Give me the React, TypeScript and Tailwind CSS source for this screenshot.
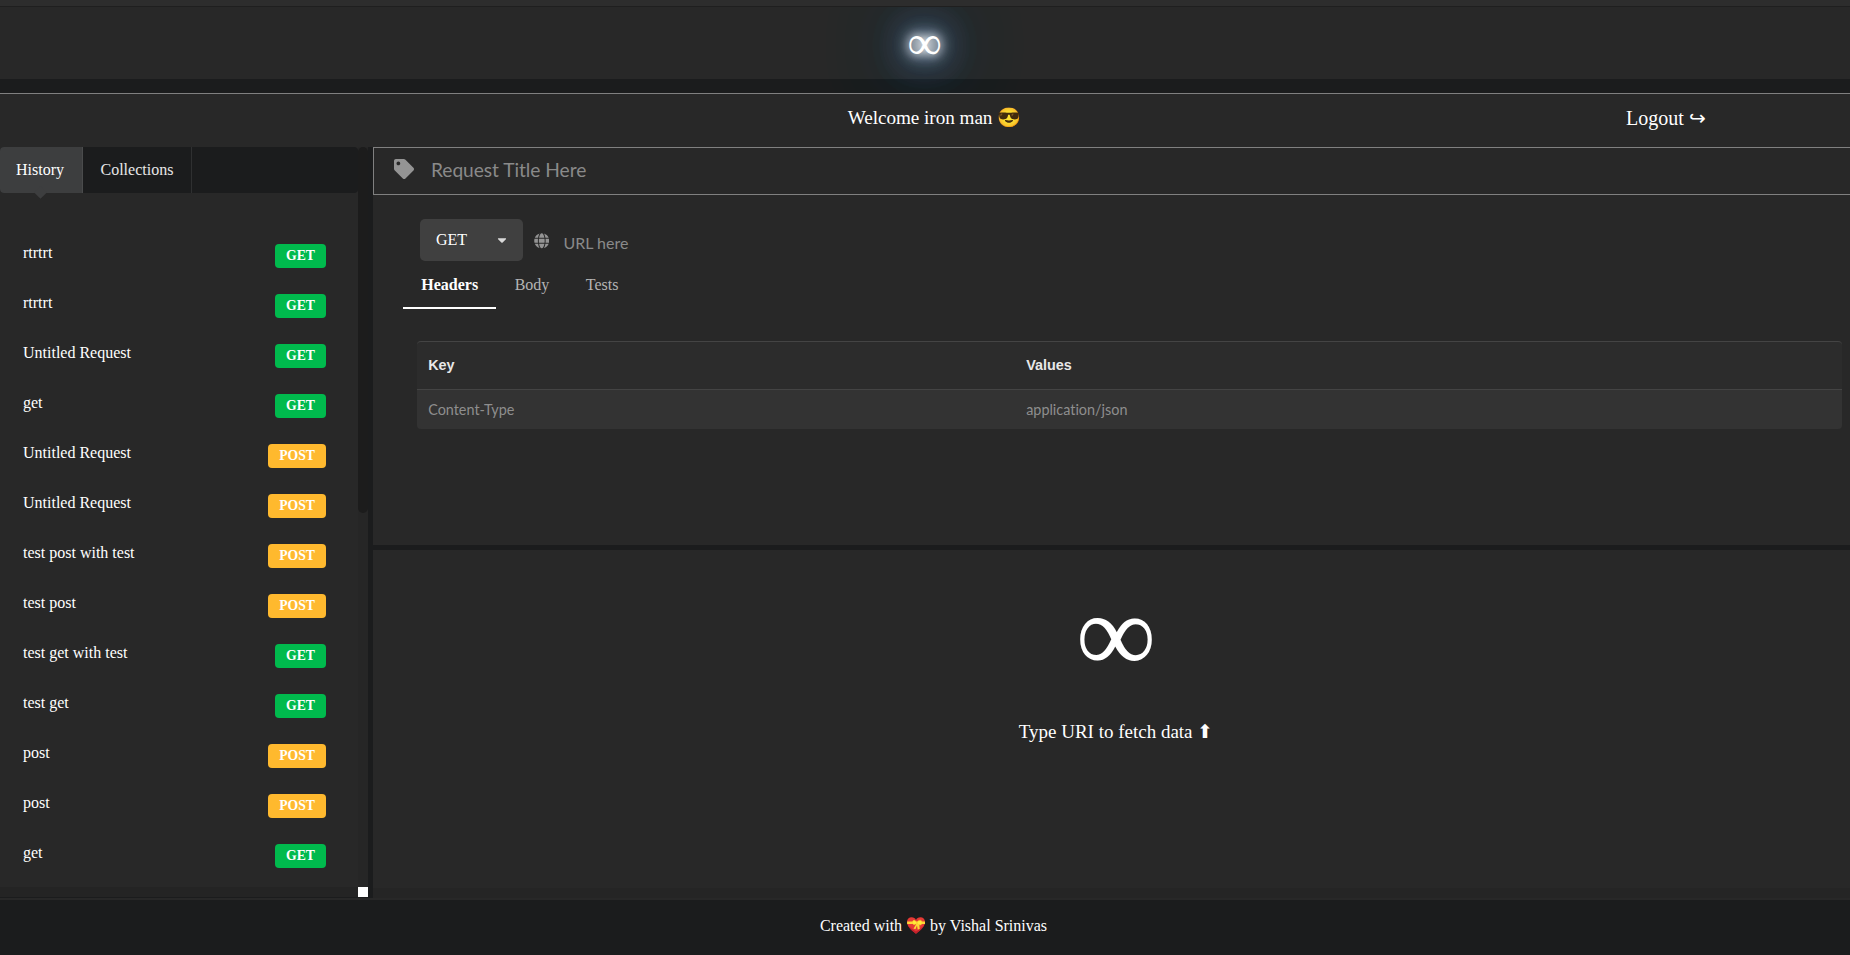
import React from "react";
import { FaTag, FaGlobe, FaCaretDown } from "react-icons/fa";

type Method = "GET" | "POST";

const history: { title: string; method: Method }[] = [
  { title: "rtrtrt", method: "GET" },
  { title: "rtrtrt", method: "GET" },
  { title: "Untitled Request", method: "GET" },
  { title: "get", method: "GET" },
  { title: "Untitled Request", method: "POST" },
  { title: "Untitled Request", method: "POST" },
  { title: "test post with test", method: "POST" },
  { title: "test post", method: "POST" },
  { title: "test get with test", method: "GET" },
  { title: "test get", method: "GET" },
  { title: "post", method: "POST" },
  { title: "post", method: "POST" },
  { title: "get", method: "GET" },
];

function Header() {
  return (
    <header className="h-[93px] shrink-0 bg-[#1b1c1d]">
      <div className="h-1.5 bg-[#2d2d2d]" />
      <div className="h-[87px] overflow-hidden border-t border-[#1f1f1f]">
        <div className="flex h-[72px] justify-center bg-[#282828] pr-px">
          <h1 className="mt-[10px] text-[48px] leading-[52px] text-white [text-shadow:0_0_8px_#fff,0_0_14px_#fff,0_0_20px_#dcecff,0_0_36px_#4a9cf5,0_0_44px_#3c96f5,0_0_70px_#3c96f5,0_0_84px_#3c96f5,0_0_100px_#2a8a90]">
            ∞
          </h1>
        </div>
      </div>
    </header>
  );
}

function WelcomeBar() {
  return (
    <div className="flex h-[54px] shrink-0 border-t border-[#808080] bg-[#282828] text-white">
      <div className="w-[847.7px]" />
      <p className="mt-[12px] w-[778.3px] text-[19.2px] leading-6 tracking-[-0.05px]">Welcome iron man 😎</p>
      <button className="mt-[12px] h-6 text-[20px] leading-6">Logout ↪</button>
    </div>
  );
}

function MethodLabel({ method }: { method: Method }) {
  return (
    <span
      className={
        "h-6 rounded-[4px] px-[11px] text-[13.7px] font-bold leading-6 text-white " +
        (method === "GET" ? "bg-[#00ba4d]" : "bg-[#ffb92e]")
      }
    >
      {method}
    </span>
  );
}

function Sidebar() {
  return (
    <aside className="flex h-[750px] w-[368px] shrink-0 flex-col bg-[#282828]">
      <div className="flex min-h-0 flex-1">
        <div className="flex w-[358px] flex-col">
          <nav className="flex h-[46px] shrink-0 rounded-[4px] bg-[#1b1c1d] text-[16px] leading-[45px] text-white/90">
            <a className="relative w-[83px] rounded-l-[4px] border-r border-[#4a4b4c] bg-[#3d3e3f] pl-4 text-white">
              History
              <span className="absolute left-[35.5px] top-[41px] size-[9px] rotate-45 bg-[#3d3e3f]" />
            </a>
            <a className="w-[109px] border-r border-[#2f3031] pl-[17.5px]">Collections</a>
          </nav>
          <ul className="mt-[45px] flex flex-col pl-[23px] pr-8">
            {history.map((item, i) => (
              <li key={i} className="flex h-[50px] shrink-0 items-start justify-between text-[16px] text-white">
                <span className="mt-[5px] leading-5">{item.title}</span>
                <span className="mt-[6px] flex">
                  <MethodLabel method={item.method} />
                </span>
              </li>
            ))}
          </ul>
        </div>
        <div className="w-2.5 bg-[#262626]">
          <div className="h-[366px] rounded-[5px] bg-[#1c1c1c]" />
        </div>
      </div>
      <div className="flex h-2.5 justify-end bg-[#242424]">
        <div className="w-2.5 bg-white" />
      </div>
    </aside>
  );
}

function RequestPanel() {
  return (
    <section className="h-[398px] shrink-0 bg-[#282828]">
      <div className="flex h-12 items-center border border-r-0 border-[#808080] pl-[20px] font-[Lato,sans-serif]">
        <FaTag className="mt-[-4px] size-[20px] text-[#949494]" />
        <input
          placeholder="Request Title Here"
          className="mb-[2px] ml-[17px] w-[600px] bg-transparent text-[19.2px] tracking-[-0.05px] text-white outline-none placeholder:text-[#8a8a8a]"
        />
      </div>
      <div className="flex h-[66px] pl-[47px] pt-6">
        <button className="flex h-[42px] w-[103px] items-center justify-between rounded-[5px] bg-[#404040] pl-4 pr-[14px] text-[16px] text-white">
          GET
          <FaCaretDown className="size-[14px] text-white/80" />
        </button>
        <FaGlobe className="ml-[10.7px] mt-[14px] size-[15.5px] text-[#949494]" />
        <input
          placeholder="URL here"
          className="ml-[14.3px] mt-[12px] h-[24px] w-[600px] bg-transparent font-[Lato,sans-serif] text-[16px] text-white outline-none placeholder:text-[#8a8a8a]"
        />
      </div>
      <nav className="ml-[30px] flex h-[48px] pt-px text-[16px] leading-[46px] text-[#b4b4b4]">
        <a className="w-[93px] border-b-2 border-white pl-[18.3px] font-bold text-white">Headers</a>
        <a className="ml-[18.7px]">Body</a>
        <a className="ml-[36.5px]">Tests</a>
      </nav>
      <div className="ml-11 mr-2 mt-[32px] overflow-hidden rounded-[4px] border-t border-[#444] bg-[#2c2c2c]">
        <div className="grid h-[47px] grid-cols-[598px_1fr] font-['Liberation_Sans',sans-serif] text-[14.4px] font-bold leading-[47px] text-[#e8e8e8]">
          <span className="pl-[11.2px]">Key</span>
          <span className="pl-[11.2px]">Values</span>
        </div>
        <div className="grid h-[40px] grid-cols-[598px_1fr] border-t border-[#444] bg-[#333] font-[Lato,sans-serif] text-[14.4px] [font-variant-ligatures:none]">
          <input placeholder="Content-Type" className="bg-transparent pl-[11.2px] pt-px outline-none placeholder:text-[#8e8e8e]" />
          <input placeholder="application/json" className="bg-transparent pl-[11.2px] pt-px outline-none placeholder:text-[#8e8e8e]" />
        </div>
      </div>
    </section>
  );
}

function ResponsePanel() {
  return (
    <section className="mt-[5px] flex min-h-0 flex-1 flex-col bg-[#282828] text-white">
      <div className="flex h-[338px] flex-col items-center pl-[9px]">
        <div className="mt-[24px] text-[112px] leading-[120px]">∞</div>
        <p className="mt-[26px] text-[19px] leading-6">Type URI to fetch data ⬆</p>
      </div>
      <div className="h-[10px] bg-[#252525]" />
    </section>
  );
}

function RibbonHeart() {
  return (
    <svg viewBox="0 0 18 17" className="mx-px inline-block h-[17px] w-[18px] align-[-3px]" role="img" aria-label="heart with ribbon">
      <path
        d="M9 16.8C7.5 15.2 0 10.6 0 5.2 0 2.2 2 .3 4.6.3 6.700.3 8.200 1.400 9 3 9.800 1.400 11.300.3 13.400.3 16 .3 18 2.200 18 5.200 18 10.600 10.500 15.200 9 16.800Z"
        fill="#e53935"
      />
      <path d="M1 8.500C2.500 12.500 7.500 15.300 9 16.800c1.500-1.500 6-4.300 8-8.300-3 3-6 5-8 6-2-1-5-3-8-6Z" fill="#c2202b" />
      <path d="M.1 4.600 18 4.600 18 7 .2 7Z" fill="#fdd835" />
      <path d="m9.500 6.500-3 5.300 2 .2 1.500-3.500.700 4 2-.500-.500-5Z" fill="#fdd835" />
      <path d="M9.800 5.500C7.500 2.300 5.500 3 5.600 5.500s2 3 4.200.5Zm.2 0c1.800-3.200 4.800-3 5 0s-2.800 3.400-5 .500Z" fill="#ffeb3b" stroke="#fbc02d" strokeWidth=".5" />
    </svg>
  );
}

export default function App() {
  return (
    <div className="flex h-[955px] w-[1850px] flex-col overflow-hidden bg-[#1b1c1d] font-['Liberation_Serif',serif]">
      <Header />
      <WelcomeBar />
      <main className="flex h-[753px] shrink-0 border-b-2 border-[#282828]">
        <Sidebar />
        <div className="ml-[5px] flex min-w-0 flex-1 flex-col">
          <RequestPanel />
          <ResponsePanel />
        </div>
      </main>
      <footer className="pl-[17px] pt-[14px] text-center text-[16px] leading-6 text-white">
        Created with <RibbonHeart /> by Vishal Srinivas
      </footer>
    </div>
  );
}
